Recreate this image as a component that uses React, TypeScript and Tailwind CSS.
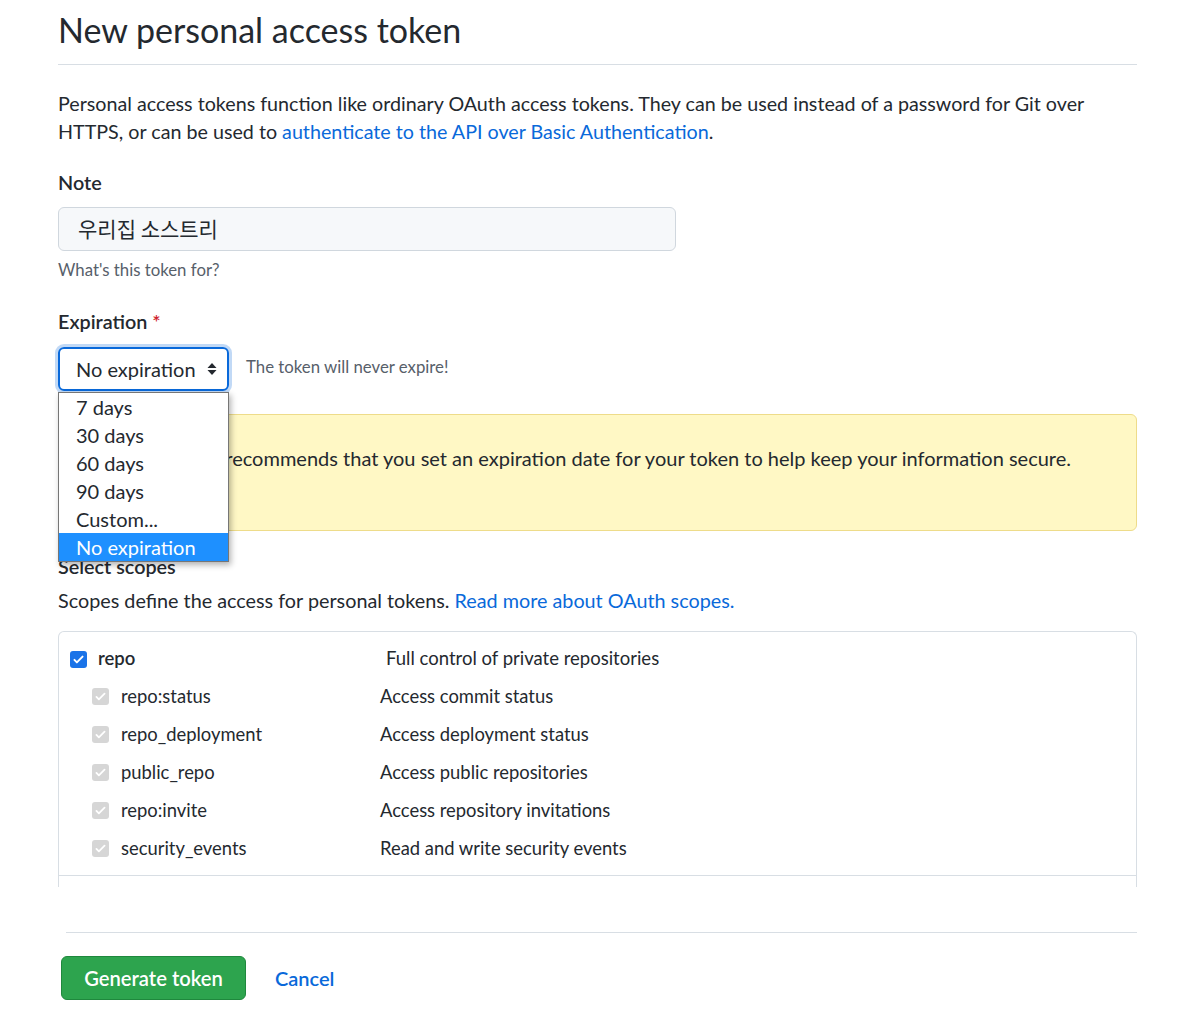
import React from "react";

const font = { fontFamily: "Lato, 'Noto Sans CJK KR', sans-serif" };

function BlueCheck() {
  return (
    <span className="inline-flex h-[17px] w-[17px] items-center justify-center rounded-[3px] bg-[#1a73e8]">
      <svg width="13" height="13" viewBox="0 0 16 16" fill="none">
        <path d="M3 8.5l3 3 7-7" stroke="white" strokeWidth="2.4" strokeLinecap="round" strokeLinejoin="round" />
      </svg>
    </span>
  );
}

function GrayCheck() {
  return (
    <span className="inline-flex h-[17px] w-[17px] items-center justify-center rounded-[3px] bg-[#d6d6d6]">
      <svg width="13" height="13" viewBox="0 0 16 16" fill="none">
        <path d="M3 8.5l3 3 7-7" stroke="white" strokeWidth="2.2" strokeLinecap="round" strokeLinejoin="round" />
      </svg>
    </span>
  );
}

const subs = [
  ["repo:status", "Access commit status"],
  ["repo_deployment", "Access deployment status"],
  ["public_repo", "Access public repositories"],
  ["repo:invite", "Access repository invitations"],
  ["security_events", "Read and write security events"],
];

export default function App() {
  return (
    <div className="min-h-[1035px] w-[1192px] bg-white text-[#24292f]" style={font}>
      <div className="ml-[58px] w-[1079px] pt-[10px]">
        <h1 className="border-b border-[#d8dee4] pb-[14px] text-[34px] leading-[40px] font-normal">
          New personal access token
        </h1>
        <p className="mt-[25px] text-[19.7px] leading-[28px]">
          Personal access tokens function like ordinary OAuth access tokens. They can be used instead of a password for Git over
          <br />
          HTTPS, or can be used to{" "}
          <span className="text-[#0969da]">authenticate to the API over Basic Authentication</span>.
        </p>

        <div className="mt-[22px] text-[19.8px] leading-[28px] font-semibold">Note</div>
        <div className="mt-[11px] flex h-[44px] w-[618px] items-center rounded-[6px] border border-[#d0d7de] bg-[#f6f8fa] pl-[19px] text-[21px]" style={{ fontFamily: "'Noto Sans CJK KR', sans-serif" }}>
          우리집 소스트리
        </div>
        <div className="mt-[8px] text-[16.8px] leading-[22px] text-[#57606a]">What's this token for?</div>

        <div className="mt-[26px] text-[19.8px] leading-[28px] font-semibold">
          Expiration <span className="text-[#cf222e]">*</span>
        </div>
        <div className="relative mt-[12px] flex items-center">
          <div className="flex h-[44px] w-[171px] items-center justify-between rounded-[6px] border-2 border-[#0969da] pl-[16px] pr-[10px] text-[20px] shadow-[0_0_0_3px_rgba(9,105,218,0.25)]">
            <span className="-mt-[1px]">No expiration</span>
            <svg width="10" height="16" viewBox="0 0 10 16">
              <path d="M5 2L9.5 7H0.5z" fill="#24292f" />
              <path d="M5 14L9.5 9H0.5z" fill="#24292f" />
            </svg>
          </div>
          <span className="ml-[17px] -mt-[4px] text-[16.8px] text-[#57606a]">The token will never expire!</span>
          <div className="absolute left-0 top-[45px] z-10 w-[171px] border border-[#767676] bg-white text-[20px] leading-[28px] shadow-[2px_3px_6px_rgba(0,0,0,0.3)]">
            <div className="pl-[17px]">7 days</div>
            <div className="pl-[17px]">30 days</div>
            <div className="pl-[17px]">60 days</div>
            <div className="pl-[17px]">90 days</div>
            <div className="pl-[17px]">Custom...</div>
            <div className="bg-[#1e90ff] pl-[17px] text-white">No expiration</div>
          </div>
        </div>

        <div className="mt-[23px] h-[117px] rounded-[6px] border border-[#eedc8a] bg-[#fff8c5] pl-[22px] pt-[29px] text-[20px] leading-[28px]">
          GitHub strongly recommends that you set an expiration date for your token to help keep your information secure.
        </div>

        <div className="mt-[21px] text-[19.8px] leading-[28px] font-semibold">Select scopes</div>
        <p className="mt-[6px] text-[19.8px] leading-[28px]">
          Scopes define the access for personal tokens. <span className="text-[#0969da]">Read more about OAuth scopes.</span>
        </p>

        <div className="mt-[17px] h-[256px] overflow-hidden rounded-t-[6px] border-x border-t border-[#d8dee4]">
          <div className="border-b border-[#d8dee4] pb-[12px] pt-[13px]">
            <div className="flex h-[28px] items-center text-[18.5px]">
              <span className="ml-[11px] flex w-[316px] items-center">
                <BlueCheck />
                <span className="ml-[11px] font-semibold">repo</span>
              </span>
              <span>Full control of private repositories</span>
            </div>
            {subs.map(([n, d]) => (
              <div key={n} className="mt-[10px] flex h-[28px] items-center text-[18.4px]">
                <span className="ml-[33px] flex w-[288px] items-center">
                  <GrayCheck />
                  <span className="ml-[12px]">{n}</span>
                </span>
                <span>{d}</span>
              </div>
            ))}
          </div>
        </div>

        <div className="ml-[8px] mt-[45px] border-t border-[#d8dee4]" />
        <div className="mt-[23px] flex items-center">
          <button className="ml-[3px] h-[44px] w-[185px] rounded-[6px] border border-[#1f883d] bg-[#2da44e] text-[20.2px] font-semibold text-white">
            Generate token
          </button>
          <span className="ml-[29px] text-[20px] font-semibold text-[#0969da]">Cancel</span>
        </div>
      </div>
    </div>
  );
}
